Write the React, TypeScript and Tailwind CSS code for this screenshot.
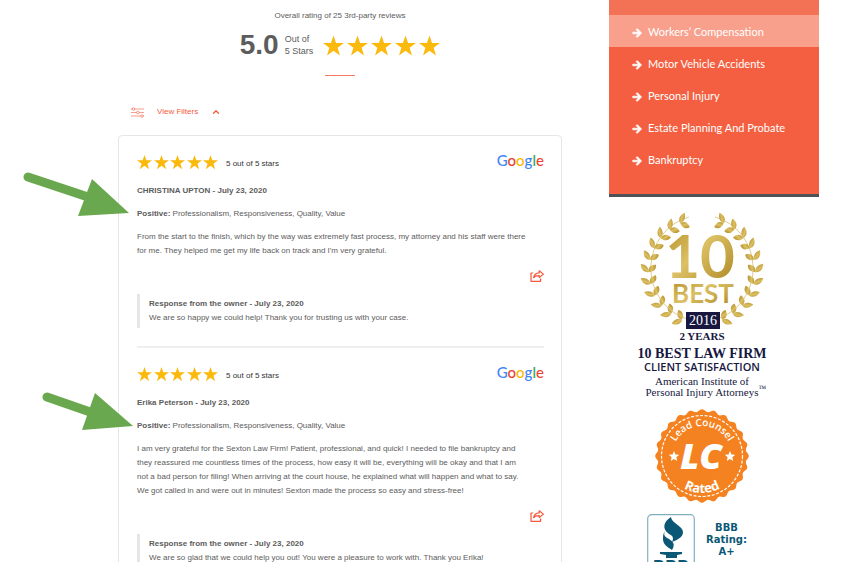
import type { ReactNode } from "react";
import { FaArrowRight } from "react-icons/fa";
import { ChevronUp } from "lucide-react";

interface Review {
  readonly author: string;
  readonly date: string;
  readonly positives: string;
  readonly lines: readonly string[];
  readonly response: string;
}

const reviews: readonly Review[] = [
  {
    author: "CHRISTINA UPTON",
    date: "July 23, 2020",
    positives: "Professionalism, Responsiveness, Quality, Value",
    lines: [
      "From the start to the finish, which by the way was extremely fast process, my attorney and his staff were there",
      "for me. They helped me get my life back on track and I'm very grateful.",
    ],
    response:
      "We are so happy we could help! Thank you for trusting us with your case.",
  },
  {
    author: "Erika Peterson",
    date: "July 23, 2020",
    positives: "Professionalism, Responsiveness, Quality, Value",
    lines: [
      "I am very grateful for the Sexton Law Firm! Patient, professional, and quick! I needed to file bankruptcy and",
      "they reassured me countless times of the process, how easy it will be, everything will be okay and that I am",
      "not a bad person for filing! When arriving at the court house, he explained what will happen and what to say.",
      "We got called in and were out in minutes! Sexton made the process so easy and stress-free!",
    ],
    response:
      "We are so glad that we could help you out! You were a pleasure to work with. Thank you Erika!",
  },
];

const practiceAreas = [
  "Workers’ Compensation",
  "Motor Vehicle Accidents",
  "Personal Injury",
  "Estate Planning And Probate",
  "Bankruptcy",
];

function Star({ className }: { readonly className: string }) {
  return (
    <svg viewBox="0 0 20 19" className={className} aria-hidden="true">
      <path
        fill="#fbb90c"
        d="M10 0l2.4 7.2H20l-6.1 4.5 2.3 7.3L10 14.5 3.8 19l2.3-7.3L0 7.2h7.6z"
      />
    </svg>
  );
}

function Stars({
  className,
  starClass,
}: {
  readonly className: string;
  readonly starClass: string;
}) {
  return (
    <div className={className} role="img" aria-label="5 stars">
      {[0, 1, 2, 3, 4].map((i) => (
        <Star key={i} className={starClass} />
      ))}
    </div>
  );
}

function GoogleLogo() {
  return (
    <span className="font-[Lato,sans-serif] text-[15px] leading-[14px] font-medium">
      <span className="text-[#4285f4]">G</span>
      <span className="text-[#ea4335]">o</span>
      <span className="text-[#fbbc05]">o</span>
      <span className="text-[#4285f4]">g</span>
      <span className="text-[#34a853]">l</span>
      <span className="text-[#ea4335]">e</span>
    </span>
  );
}

function ShareIcon() {
  return (
    <svg
      viewBox="0 0 14 12"
      className="h-3 w-3.5"
      fill="none"
      stroke="#f4593c"
      strokeWidth="1.2"
      strokeLinejoin="round"
      aria-hidden="true"
    >
      <path d="M3.2 3H1v8.3h9.6V8.6" />
      <path d="M9.2.8l4.2 3.3-4.2 3.4V5.6C6.6 5.4 5 6 3.6 7.6 4 4.8 6 2.9 9.2 2.8z" />
    </svg>
  );
}

function FilterIcon() {
  return (
    <svg
      viewBox="0 0 13 11"
      className="h-[11px] w-[13px]"
      fill="#fff"
      stroke="#f4593c"
      strokeWidth=".6"
      aria-hidden="true"
    >
      <path d="M0 2h13M0 5.5h13M0 9h13" />
      <circle cx="2.4" cy="2" r="1.3" />
      <circle cx="6.8" cy="5.5" r="1.3" />
      <circle cx="11" cy="9" r="1.3" />
    </svg>
  );
}

function ReviewItem({ review }: { readonly review: Review }) {
  return (
    <article className="border-t-2 border-[#efefef] pt-[17px] pb-[18px] first:border-t-0">
      <div className="flex items-start justify-between">
        <div className="flex items-center">
          <Stars
            className="flex w-[81px] justify-between"
            starClass="h-4 w-[15px]"
          />
          <p className="ml-2 pt-1 text-[8px] text-[#333]">5 out of 5 stars</p>
        </div>
        <GoogleLogo />
      </div>
      <h3 className="mt-[13px] font-bold">
        {review.author} - {review.date}
      </h3>
      <p className="mt-[9px]">
        <strong>Positive:</strong> {review.positives}
      </p>
      <p className="mt-[9px]">
        {review.lines.map((line) => (
          <span key={line} className="block whitespace-nowrap">
            {line}
          </span>
        ))}
      </p>
      <div className="mt-3 flex justify-end">
        <button type="button" aria-label="Share review">
          <ShareIcon />
        </button>
      </div>
      <div className="mt-3 border-l-[3px] border-[#e6e6e6] py-[3px] pl-[9px]">
        <p className="font-bold">Response from the owner - {review.date}</p>
        <p>{review.response}</p>
      </div>
    </article>
  );
}

function PracticeMenu() {
  return (
    <nav className="w-full border-b-[3px] border-[#4c5256] bg-[#f45f41]">
      <div className="h-[15px] bg-[#f37155]" />
      <ul className="pb-[19px]">
        {practiceAreas.map((area) => (
          <li key={area} className="first:bg-[#f8a08c]">
            <a
              href="#"
              className="flex h-8 items-center gap-1.5 pt-0.5 pl-[23px] font-[Lato,sans-serif] text-[11px] text-white"
            >
              <FaArrowRight
                className="mt-0.5 size-2.5"
                stroke="currentColor"
                strokeWidth={40}
              />
              {area}
            </a>
          </li>
        ))}
      </ul>
    </nav>
  );
}

const leafCount = 11;

function Laurel() {
  return (
    <g fill="url(#gold)">
      <path
        d="M52 8A51 53 0 0 0 50 110"
        fill="none"
        stroke="#c9a94e"
        strokeWidth=".6"
      />
      {Array.from({ length: leafCount }, (_, i) => {
        const deg = 112 + (i * 134) / (leafCount - 1);
        const rad = (deg * Math.PI) / 180;
        const x = 65 + 53 * Math.cos(rad);
        const y = 62 + 52 * Math.sin(rad);
        return (
          <g key={deg} transform={`translate(${x} ${y}) rotate(${deg + 90})`}>
            <path
              d="M0 0C1-4 6-6 11-3 8 1 4 2 0 0z"
              transform="rotate(-30)"
            />
            <path
              d="M0 0C3-4 7-3 10 1 7 4 3 4 0 0z"
              transform="rotate(40)"
            />
          </g>
        );
      })}
    </g>
  );
}

function TenBestBadge() {
  return (
    <div className="flex flex-col items-center text-[#17173f]">
      <svg
        viewBox="0 0 130 122"
        className="h-[122px] w-[130px]"
        aria-label="10 Best 2016"
      >
        <defs>
          <linearGradient id="gold" x1="0" y1="0" x2="1" y2="1">
            <stop offset="0" stopColor="#b08a22" />
            <stop offset=".45" stopColor="#dcc064" />
            <stop offset="1" stopColor="#a8821c" />
          </linearGradient>
        </defs>
        <Laurel />
        <g transform="matrix(-1 0 0 1 130 0)">
          <Laurel />
        </g>
        <text
          x="63"
          y="69"
          textAnchor="middle"
          fill="url(#gold)"
          className="font-[Lato,sans-serif] text-[60px] font-bold"
        >
          10
        </text>
        <text
          x="66"
          y="94"
          textAnchor="middle"
          fill="url(#gold)"
          className="font-[Lato,sans-serif] text-[26px] font-bold"
        >
          BEST
        </text>
        <path d="M49 103h34v17H49z" fill="#17173f" />
        <text
          x="66"
          y="116"
          textAnchor="middle"
          fill="#fff"
          className="font-['Liberation_Serif',serif] text-[14px]"
        >
          2016
        </text>
      </svg>
      <div className="flex flex-col items-center font-['Liberation_Serif',serif] whitespace-nowrap">
        <p className="text-[11px] leading-[11px] font-bold">2 YEARS</p>
        <p className="mt-1 text-[14px] leading-[15px] font-bold">
          10 BEST LAW FIRM
        </p>
        <p className="font-['Open_Sans',sans-serif] text-[11px] leading-3 font-semibold">
          CLIENT SATISFACTION
        </p>
        <p className="mt-[3px] text-[11px] leading-[11px]">
          American Institute of
        </p>
        <p className="relative text-[11px] leading-[11px]">
          Personal Injury Attorneys
          <span className="absolute -top-1 left-full text-[8px]">™</span>
        </p>
      </div>
    </div>
  );
}

const sealOutline = Array.from({ length: 240 }, (_, i) => {
  const a = (i * Math.PI) / 120;
  const r = 45.5 + 1.3 * Math.cos(24 * a);
  return `${(48 + r * Math.sin(a)).toFixed(2)},${(48 - r * Math.cos(a)).toFixed(2)}`;
}).join(" ");

function LeadCounselBadge() {
  return (
    <svg
      viewBox="0 0 96 96"
      className="h-24 w-24 font-['Open_Sans',sans-serif]"
      fill="#fff"
      aria-label="Lead Counsel Rated"
    >
      <polygon points={sealOutline} fill="#f58220" />
      <circle
        cx="48"
        cy="48"
        r="40.5"
        fill="none"
        stroke="#fff"
        strokeWidth="1.2"
        strokeDasharray="3 1.6"
      />
      <path id="seal-top" d="M18 48a30 30 0 0 1 60 0" fill="none" />
      <path id="seal-bottom" d="M11 48a37 37 0 0 0 74 0" fill="none" />
      <text textAnchor="middle" className="text-[10px] font-semibold">
        <textPath href="#seal-top" startOffset="50%">
          Lead Counsel
        </textPath>
      </text>
      <text textAnchor="middle" className="text-[13px] font-bold">
        <textPath href="#seal-bottom" startOffset="50%">
          Rated
        </textPath>
      </text>
      <text
        x="47"
        y="61"
        textAnchor="middle"
        className="text-[36px] font-extrabold italic"
      >
        LC
      </text>
      <path d="M20 43l1.5 3.4 3.7.4-2.8 2.5.8 3.7-3.2-1.9-3.2 1.9.8-3.7-2.8-2.5 3.7-.4z" />
      <path d="M76 43l1.5 3.4 3.7.4-2.8 2.5.8 3.7-3.2-1.9-3.2 1.9.8-3.7-2.8-2.5 3.7-.4z" />
    </svg>
  );
}

function BbbBadge() {
  return (
    <div className="flex items-start gap-[11px] font-bold text-[#0b5876]">
      <svg
        viewBox="0 0 48 76"
        className="h-[76px] w-12"
        fill="#0b5876"
        aria-label="BBB"
      >
        <rect
          x=".7"
          y=".7"
          width="46.6"
          height="74.6"
          rx="4"
          fill="#fff"
          stroke="#7fb0c0"
          strokeWidth="1.2"
        />
        <path d="M24 3c0 6 12 9 12 15 0 5-4 7-11 10 2-4 1-6-3-8-7-5-6-12 2-17z" />
        <path d="M18 17c-2 4 0 6 4 8 5 3 6 6 3 11-5-3-9-6-9-11 0-3 0-5 2-8z" />
        <path d="M13 38h22v2l-5 1v3H19v-3l-6-1z" />
        <text
          x="24"
          y="58"
          textAnchor="middle"
          className="font-['DejaVu_Sans',sans-serif] text-[16px] font-bold"
        >
          BBB
        </text>
      </svg>
      <p className="pt-2 text-center font-['DejaVu_Sans',sans-serif] text-[10px] leading-3">
        BBB
        <br />
        Rating:
        <br />
        A+
      </p>
    </div>
  );
}

function Pointer({ className }: { readonly className: string }) {
  return (
    <svg
      viewBox="0 0 106 46"
      className={className}
      fill="#6aa84f"
      aria-hidden="true"
    >
      <path
        d="M5 7l60 20"
        stroke="#6aa84f"
        strokeWidth="9"
        strokeLinecap="round"
      />
      <path d="M69 9l37 34-51 3z" />
    </svg>
  );
}

function ShortPointer({ className }: { readonly className: string }) {
  return (
    <svg
      viewBox="0 0 91 40"
      className={className}
      fill="#6aa84f"
      aria-hidden="true"
    >
      <path
        d="M5 6l46 16"
        stroke="#6aa84f"
        strokeWidth="9"
        strokeLinecap="round"
      />
      <path d="M53 2l38 33-51 4z" />
    </svg>
  );
}

function Column({ children }: { readonly children: ReactNode }) {
  return <div className="min-w-0 flex-1">{children}</div>;
}

export default function App() {
  return (
    <div className="relative flex h-screen items-start gap-[47px] overflow-hidden bg-white pr-[31px] pl-[118px] font-['Liberation_Sans',Arial,sans-serif] text-[8px] leading-[14px] text-[#5c5c5c]">
      <Column>
        <header className="flex flex-col items-center pt-[9px]">
          <p>Overall rating of 25 3rd-party reviews</p>
          <div className="mt-2 flex items-center">
            <p className="text-[28px] leading-7 font-bold">5.0</p>
            <p className="ml-1.5 text-[9px] leading-3">
              Out of
              <br />5 Stars
            </p>
            <Stars
              className="ml-2.5 flex gap-[3px]"
              starClass="h-[21px] w-[21px]"
            />
          </div>
          <hr className="mt-4 w-[30px] border-t border-[#f47860]" />
        </header>

        <button
          type="button"
          className="mt-[29px] ml-[13px] flex items-center gap-[13px] text-[#f4593c]"
        >
          <FilterIcon />
          View Filters
          <ChevronUp className="size-2.5" strokeWidth={3} />
        </button>

        <main className="mt-4 rounded-sm border border-[#e6e6e6] pr-[17px] pl-[18px]">
          {reviews.map((review) => (
            <ReviewItem key={review.author} review={review} />
          ))}
        </main>
      </Column>

      <aside className="flex w-[210px] flex-col items-center">
        <PracticeMenu />
        <div className="mt-3 flex flex-col items-center pr-6">
          <TenBestBadge />
          <div className="mt-2.5">
            <LeadCounselBadge />
          </div>
          <div className="mt-2.5 ml-2.5 self-start">
            <BbbBadge />
          </div>
        </div>
      </aside>

      <Pointer className="absolute top-[170px] left-[23px] h-[46px] w-[106px]" />
      <ShortPointer className="absolute top-[391px] left-[42px] h-10 w-[91px]" />
    </div>
  );
}
